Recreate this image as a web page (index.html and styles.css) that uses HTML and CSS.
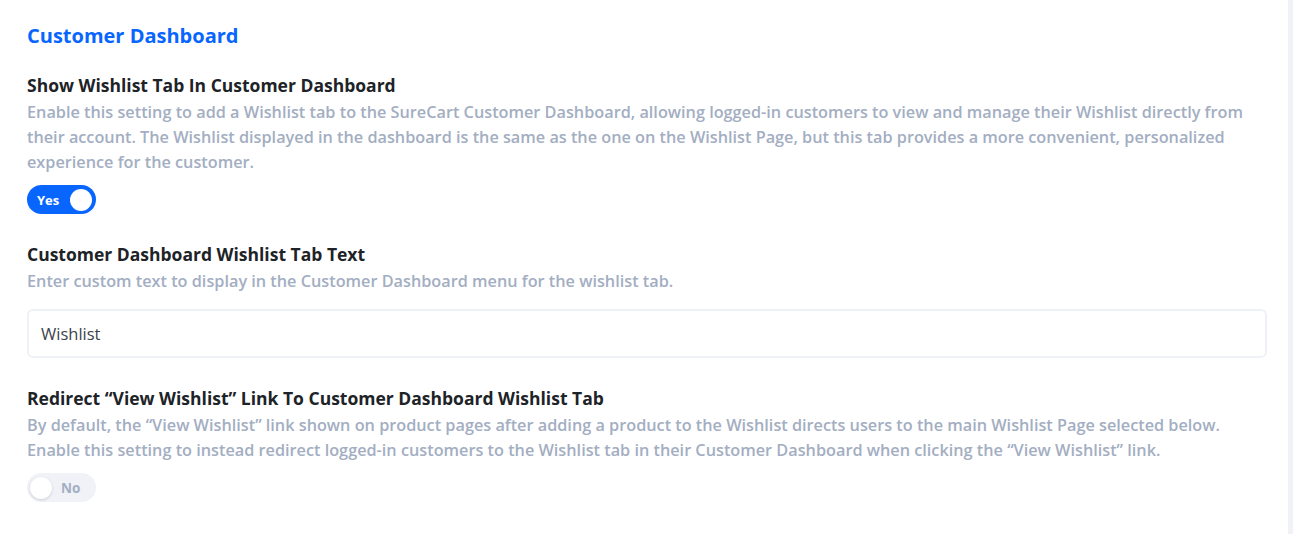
FILE: index.html
```html
<!DOCTYPE html>
<html lang="en">
<head>
  <meta charset="UTF-8">
  <meta name="viewport" content="width=device-width, initial-scale=1.0">
  <title>Customer Dashboard Settings</title>
  <link rel="stylesheet" href="styles.css">
</head>
<body>
  <div class="panel">
    <h2 class="section-title">Customer Dashboard</h2>

    <div class="setting">
      <h3>Show Wishlist Tab In Customer Dashboard</h3>
      <p>Enable this setting to add a Wishlist tab to the SureCart Customer Dashboard, allowing logged-in customers to view and manage their Wishlist directly from their account. The Wishlist displayed in the dashboard is the same as the one on the Wishlist Page, but this tab provides a more convenient, personalized experience for the customer.</p>
      <button class="toggle on" onclick="flip(this)"><span class="toggle-text">Yes</span><span class="knob"></span></button>
    </div>

    <div class="setting">
      <h3>Customer Dashboard Wishlist Tab Text</h3>
      <p>Enter custom text to display in the Customer Dashboard menu for the wishlist tab.</p>
      <input type="text" class="text-input" value="Wishlist">
    </div>

    <div class="setting">
      <h3>Redirect “View Wishlist” Link To Customer Dashboard Wishlist Tab</h3>
      <p>By default, the “View Wishlist” link shown on product pages after adding a product to the Wishlist directs users to the main Wishlist Page selected below.<br>Enable this setting to instead redirect logged-in customers to the Wishlist tab in their Customer Dashboard when clicking the “View Wishlist” link.</p>
      <button class="toggle" onclick="flip(this)"><span class="knob"></span><span class="toggle-text">No</span></button>
    </div>
  </div>

  <script>
    function flip(btn) {
      const on = !btn.classList.contains("on");
      btn.classList.toggle("on", on);
      btn.innerHTML = on
        ? '<span class="toggle-text">Yes</span><span class="knob"></span>'
        : '<span class="knob"></span><span class="toggle-text">No</span>';
    }
  </script>
</body>
</html>
```

FILE: styles.css
```css
body {
  font-family: "Open Sans", Arial, sans-serif;
  background: #f0f2f7;
  margin: 0;
  padding: 0;
}
.panel {
  background: white;
  margin-right: 5px;
  min-height: 534px;
  padding: 22px 21px 20px 27px;
  box-sizing: border-box;
}
.section-title {
  color: #0866ff;
  font-size: 20px;
  font-weight: 700;
  line-height: 28px;
  margin: 0 0 23px;
}
.setting {
  margin-bottom: 28px;
}
.setting h3 {
  color: #1d2327;
  font-size: 17.5px;
  font-weight: 700;
  line-height: 25px;
  margin: 0 0 2px;
}
.setting p {
  color: #a3aec2;
  font-size: 16.25px;
  font-weight: 600;
  line-height: 25px;
  margin: 0;
}
.toggle {
  display: flex;
  align-items: center;
  gap: 6px;
  width: 69px;
  height: 29px;
  margin-top: 10px;
  padding: 0 4px 0 10px;
  border: none;
  border-radius: 15px;
  background: #0866ff;
  color: white;
  font-family: inherit;
  font-size: 13px;
  font-weight: 700;
  cursor: pointer;
  box-sizing: border-box;
}
.toggle .knob {
  width: 22px;
  height: 22px;
  border-radius: 50%;
  background: white;
  margin-left: auto;
}
.toggle:not(.on) {
  background: #f0f2f7;
  color: #a3aec2;
  font-size: 13.5px;
  padding: 0 10px 0 3px;
}
.toggle:not(.on) .knob {
  margin-left: 0;
  margin-right: 3px;
  box-shadow: 0 1px 3px rgba(0,0,0,0.15);
}
.text-input {
  display: block;
  width: 100%;
  height: 49px;
  margin-top: 15px;
  padding: 0 12px;
  border: 2px solid #eef1f6;
  border-radius: 6px;
  font-family: inherit;
  font-size: 16.5px;
  font-weight: 500;
  color: #3c434a;
  box-sizing: border-box;
  outline: none;
}
```
